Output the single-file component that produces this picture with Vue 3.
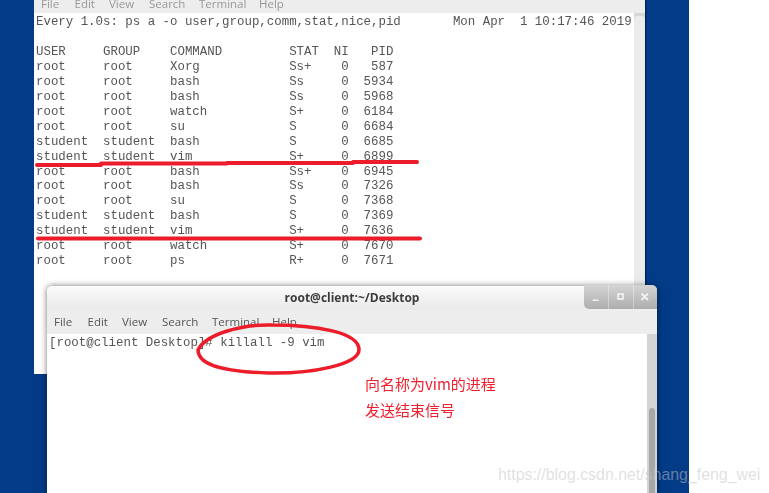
<script setup>
const menu = ['File', 'Edit', 'View', 'Search', 'Terminal', 'Help']
const procs = [
  ['root', 'root', 'Xorg', 'Ss+', 587],
  ['root', 'root', 'bash', 'Ss', 5934],
  ['root', 'root', 'bash', 'Ss', 5968],
  ['root', 'root', 'watch', 'S+', 6184],
  ['root', 'root', 'su', 'S', 6684],
  ['student', 'student', 'bash', 'S', 6685],
  ['student', 'student', 'vim', 'S+', 6899],
  ['root', 'root', 'bash', 'Ss+', 6945],
  ['root', 'root', 'bash', 'Ss', 7326],
  ['root', 'root', 'su', 'S', 7368],
  ['student', 'student', 'bash', 'S', 7369],
  ['student', 'student', 'vim', 'S+', 7636],
  ['root', 'root', 'watch', 'S+', 7670],
  ['root', 'root', 'ps', 'R+', 7671]
]
const row = (u, g, c, s, n, p) =>
  u.padEnd(9) + g.padEnd(9) + c.padEnd(16) + s.padEnd(6) + String(n).padStart(2) + String(p).padStart(6)
const screen = [
  'Every 1.0s: ps a -o user,group,comm,stat,nice,pid'.padEnd(56) + 'Mon Apr  1 10:17:46 2019',
  '',
  row('USER', 'GROUP', 'COMMAND', 'STAT', 'NI', 'PID'),
  ...procs.map(([u, g, c, s, p]) => row(u, g, c, s, 0, p))
].join('\n')
</script>

<template>
  <div class="page">
    <div class="desktop">
      <section class="win back">
        <nav class="menu back-menu">
          <span v-for="m in menu" :key="m">{{ m }}</span>
        </nav>
        <div class="term">
          <pre class="mono back-text">{{ screen }}</pre>
          <div class="track back-track"><div class="thumb back-thumb"></div></div>
        </div>
      </section>

      <section class="win front">
        <header class="title">
          <span class="title-text">root@client:~/Desktop</span>
          <div class="controls">
            <span class="ctl">
              <svg width="10" height="10" viewBox="0 0 10 10"><rect x="1.500" y="7.500" width="6" height="1.500" fill="#f2f2f2" /></svg>
            </span>
            <span class="ctl">
              <svg width="10" height="10" viewBox="0 0 10 10"><rect x="2" y="2" width="5" height="5" fill="none" stroke="#f2f2f2" stroke-width="1.700" /></svg>
            </span>
            <span class="ctl">
              <svg width="10" height="10" viewBox="0 0 10 10"><path d="M1.500 1.500 L8 8 M8 1.500 L1.500 8" stroke="#f2f2f2" stroke-width="1.800" /></svg>
            </span>
          </div>
        </header>
        <nav class="menu front-menu">
          <span v-for="m in menu" :key="m">{{ m }}</span>
        </nav>
        <div class="term">
          <pre class="mono front-text">[root@client Desktop]# killall -9 vim</pre>
          <div class="track front-track"><div class="thumb front-thumb"></div></div>
        </div>
      </section>

      <svg class="marks" width="769" height="493" viewBox="0 0 769 493">
        <g fill="none" stroke="#ed1c2a" stroke-linecap="round" stroke-linejoin="round">
          <path stroke-width="4" d="M37 165 L101 165 L101 163.500 L227 163.500 L227 163 L353 163 L353 162 L417 162" />
          <path stroke-width="4" d="M38 238.500 L240 238.500 L420 238.500" />
          <path stroke-width="3.500" d="M198 350 C205 335 240 324 272 325 C315 325 358 332 359 349 C360 365 310 374 268 373 C235 372 198 368 198 350 Z" />
        </g>
      </svg>

      <div class="note">
        <p>向名称为vim的进程</p>
        <p>发送结束信号</p>
      </div>
    </div>
    <div class="watermark">https://blog.csdn.net/shang_feng_wei</div>
  </div>
</template>

<style>
html, body { margin: 0; background: #fff; overflow: hidden; }
</style>

<style scoped>
.page {
  position: relative;
  width: 769px;
  height: 493px;
  overflow: hidden;
  background: #fff;
}
.desktop {
  position: relative;
  width: 689px;
  height: 493px;
  overflow: hidden;
  background: #033b87;
}
.win {
  position: absolute;
  display: flex;
  flex-direction: column;
  background: #fff;
}
.back {
  left: 34px;
  top: 0;
  width: 611px;
  height: 374px;
  box-shadow: 1px 0 1px rgba(0, 0, 0, .45);
}
.front {
  left: 47px;
  top: 286px;
  width: 610px;
  height: 207px;
  border-radius: 5px 5px 0 0;
  box-shadow: 0 0 6px rgba(0, 0, 0, .55);
}
.menu {
  display: flex;
  flex: none;
  background: #ededed;
  color: #555;
  font: 11.500px/1 "Open Sans", "Noto Sans", sans-serif;
  filter: blur(.35px);
}
.menu span:nth-child(1) { width: 33.500px; }
.menu span:nth-child(2) { width: 34.500px; }
.menu span:nth-child(3) { width: 40px; }
.menu span:nth-child(4) { width: 50px; }
.menu span:nth-child(5) { width: 60px; }
.back-menu {
  height: 13px;
  padding-left: 7px;
  align-items: flex-end;
  color: #999;
  overflow: hidden;
  box-sizing: border-box;
  padding-bottom: 4px;
}
.front-menu {
  height: 24px;
  padding-left: 7px;
  align-items: center;
  box-sizing: border-box;
}
.term {
  display: flex;
  flex: 1;
  min-height: 0;
}
.mono {
  flex: 1;
  margin: 0;
  color: #555;
  font-family: "Liberation Mono", monospace;
  font-size: 12.420px;
  line-height: 14.950px;
  white-space: pre;
  filter: blur(.35px);
}
.back-text { padding: 2px 0 0 2px; }
.front-text { padding: 2px 0 0 2px; }
.track {
  flex: none;
  display: flex;
  justify-content: center;
}
.back-track {
  width: 11px;
  background: #d6d6d6;
}
.back-thumb {
  width: 6px;
  margin-top: 3px;
  flex: 1;
  border-radius: 3px 3px 0 0;
  background: #ebebeb;
}
.front-track {
  width: 10px;
  background: #d4d4d4;
  padding-top: 74px;
  box-sizing: border-box;
}
.front-thumb {
  width: 6px;
  flex: none;
  height: 100px;
  border-radius: 3px 3px 0 0;
  background: #a8a8a8;
}
.title {
  position: relative;
  flex: none;
  height: 24px;
  display: flex;
  align-items: center;
  justify-content: center;
  box-sizing: border-box;
  border-radius: 5px 5px 0 0;
  background: linear-gradient(#fbfbfb, #e9e9e9);
}
.title-text {
  color: #3c3c3c;
  font: bold 12px/1 "Open Sans", "Noto Sans", sans-serif;
  filter: blur(.3px);
}
.controls {
  position: absolute;
  top: -1px;
  right: 0;
  display: flex;
  height: 24px;
  border-radius: 0 5px 0 5px;
  overflow: hidden;
  background: linear-gradient(#d4d4d4, #adadad);
  box-shadow: 0 1px 0 #eee;
}
.ctl {
  width: 24.500px;
  display: flex;
  align-items: center;
  justify-content: center;
  box-sizing: border-box;
  border-left: 1px solid rgba(255, 255, 255, .35);
}
.ctl:first-child { border-left: none; }
.marks {
  position: absolute;
  left: 0;
  top: 0;
}
.note {
  position: absolute;
  left: 365px;
  top: 371px;
  color: #f0202f;
  font: 15px/26px "Noto Sans CJK SC", sans-serif;
  filter: blur(.2px);
}
.note p { margin: 0; }
.watermark {
  position: absolute;
  left: 498px;
  top: 464px;
  color: rgba(195, 195, 195, .5);
  font: 15.900px/22px "Liberation Sans", sans-serif;
  white-space: nowrap;
}
</style>
